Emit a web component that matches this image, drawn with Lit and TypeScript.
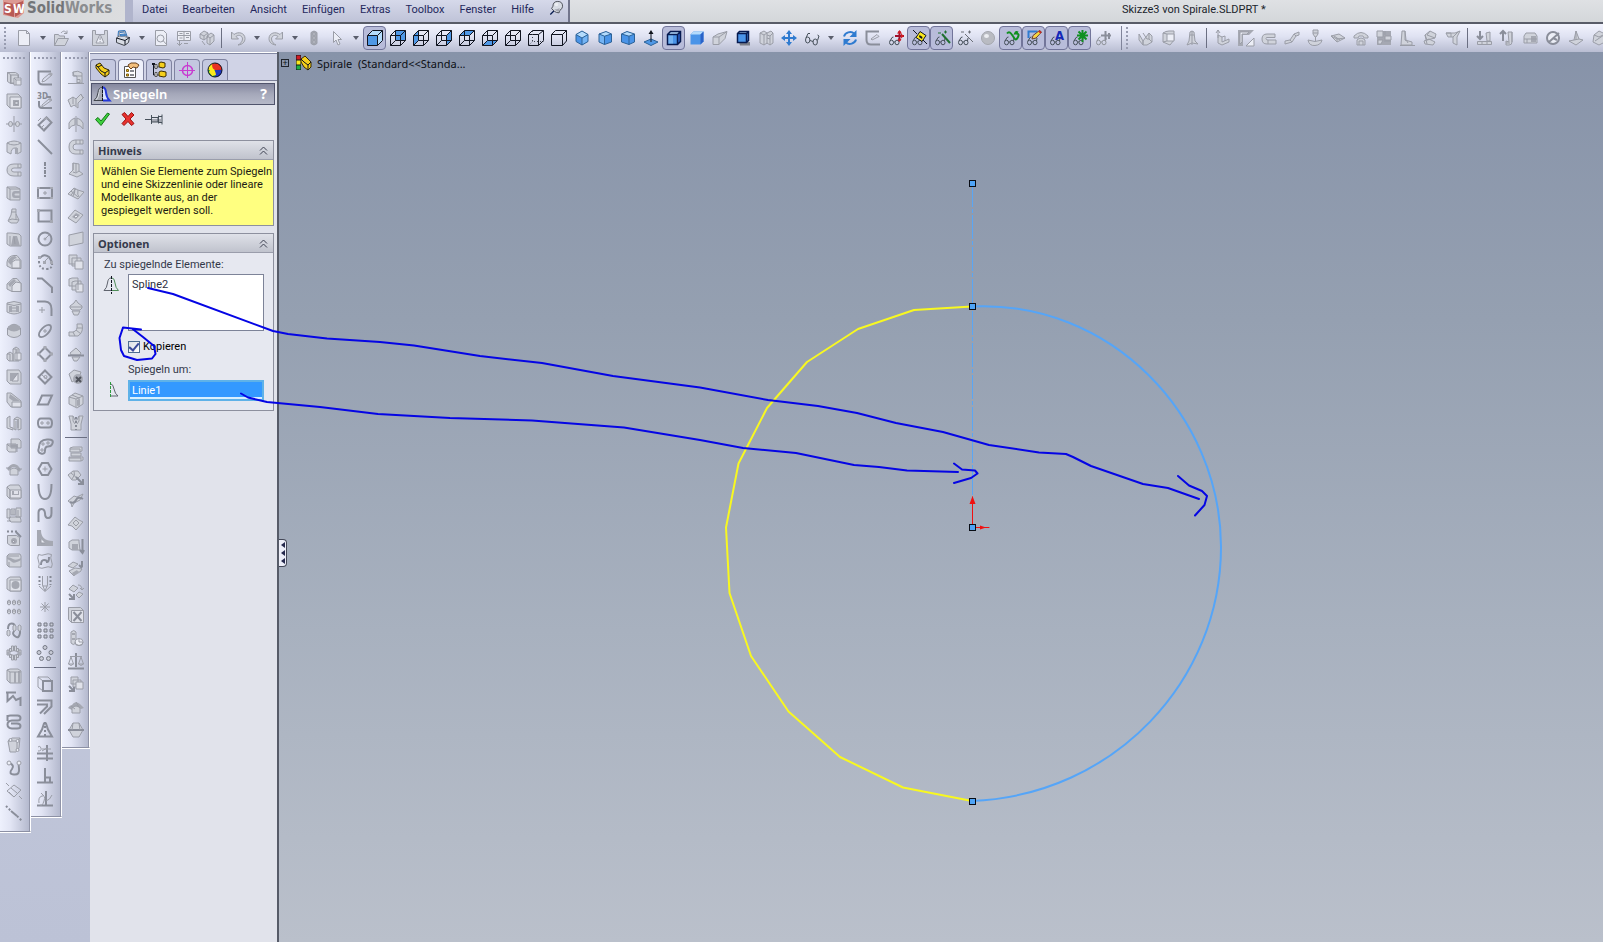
import { LitElement, html, svg, css } from "lit";
import { customElement, property } from "lit/decorators.js";

/*
 * Icon artwork on a 16 x 16 grid. Every icon is a list of shapes divided by "|";
 * the first word of a shape is the paint class, the rest is its path data.
 * A shape that starts with "T" is a text label: T class x y size text.
 */
const GL = "M1.500 12.500a2 2.300 0 1 0 4 0a2 2.300 0 1 0-4 0M7 12.500a2 2.300 0 1 0 4 0a2 2.300 0 1 0-4 0M5.500 12h1.500M2 11L4 7.500l1.500-.5M10.500 11L11 8";
const WIRE = "M.5 5.500h10v10h-10zM5.500 .5h10v10h-10zM.5 5.500l5-5M10.500 5.500l5-5M10.500 15.500l5-5M.5 15.500l5-5";
const CUBE = "M1.500 4.500l3-3h10v10l-3 3h-10zM1.500 4.500h10v10M11.500 4.500l3-3";

const ICONS: Record<string, string> = {
  // standard toolbar
  new: "w M2.500 .5h8l3 3v12h-11z|g M10.500 .5v3h3",
  open: "l M.5 4.500h4l1 1.500h5v3l-2 6.500h-8z|l M.5 15.500l3.500-7h10.500l-3.500 7z|g M7 3c2-2.500 4-2.500 5.500 0M13 .5v3h-3",
  warn: "l M.5 .5h3v4h9v-4h3v15h-15z|w M8 4l4 9H4z|n M7.500 6.500h1.200v3.500h-1.200zM7.500 11h1.200v1.200h-1.200z",
  print: "b1 M3 6L3.500 1l6.500-.5L12 6z|lk M1.500 8l3-2.500 10 2-1 5-4 3-8-3z|k M1.500 8l8.500 2.500 4.500-3M10 10.500V15|w M4 6.500L4.500 2l5-.5 1.500 5z|b1 M5 2.500l4-.5M5 4.500l5-.5 .5 1.500-5 .5z|yy M6 11.500l4 1",
  preview: "w M2.500 .5h8l3 3v12h-11z|g M10 10.500l4 4.500M11 8.500a3.500 3.500 0 1 1-7 0a3.500 3.500 0 1 1 7 0",
  drawing: "w M1.500 1.500h13v9h-13z|g M1.500 5.500h13M8 1.500v9M3.500 3.500h3M10 3.500h3M10 7.500h3M3.500 8h3M3.500 10.500v5M1 13l2.500 2.500L6 13M12 13.500H8",
  assembly: "l M1 4l4-3 4 2v4l-4 3-4-2zM8 6l4-3 3 2v6l-4 4-3-2z|g M1 4l4 2 4-3M5 6v4M8 6l3 2 4-3M11 8v7M3 11l3 4",
  undo: "l M1.500 2v7h7L6 6.500c3-2.500 6.500-.5 6.500 2.500S10 14 8 15c4.500-.5 7-3 7-6.500C15 3 8.500 1 4 4.500z",
  redo: "l M14.500 2v7h-7L10 6.500C7 4 3.500 6 3.500 9S6 14 8 15C3.500 14.500 1 12 1 8.500 1 3 7.500 1 12 4.500z",
  rebuild: "n M5 2.500q3-3 6 0v11q-3 3-6 0z|g M5 2.500q3-3 6 0v11q-3 3-6 0z|w M7 3h2v2H7zM7 7h2v2H7zM7 11h2v2H7z",
  select: "w M4.500 1.500v11l2.500-2.500 2 5 2-1-2-4.500h3.500z",
  front: "bl M.5 5.500l5-5h10v10l-5 5z|bf M1 6h9v9H1z|k M.5 5.500h10v10h-10zM.5 5.500l5-5h10v10l-5 5M10.500 5.500l5-5",
  back: "bf M5.500 .5h10v10h-10z|k " + WIRE,
  left: "bf M.5 5.500l5-5v10l-5 5z|k " + WIRE,
  right: "bf M10.500 5.500l5-5v10l-5 5z|k " + WIRE,
  top: "bf M.5 5.500l5-5h10l-5 5z|k " + WIRE,
  bottom: "bf M.5 15.500l5-5h10l-5 5z|k " + WIRE,
  wire: "k " + WIRE,
  hidden: "k M.5 4.500l4-4h11v10l-5 5H.5zM.5 4.500h10v11M10.500 4.500l5-4|dot M4.500 1v10.500h11M4.500 11.500l-4 4",
  outline: "k M.5 4.500l4-4h11v10.500l-4 4.500H.5zM.5 4.500h11v11M11.500 4.500l4-4",
  iso1: "bb M8 1l6 3.500v7L8 15l-6-3.500v-7z|bl M8 1l6 3.500L8 8 2 4.500z|bm M8 8l6-3.500v7L8 15z|bs M8 1l6 3.500v7L8 15l-6-3.500v-7zM2 4.500L8 8l6-3.500M8 8v7",
  iso2: "bb M2 4l7-2.500L14.500 4v8L7.500 14.500 2 12z|bl M2 4l7-2.500L14.500 4l-7 2.200z|bm M2 4l5.500 2.200v8.300L2 12z|bs M2 4l7-2.500L14.500 4v8L7.500 14.500 2 12zM2 4l5.500 2.200L14.500 4M7.500 6.200v8.300",
  iso3: "bb M1.500 4L7 1.500 14.500 4v8L9 14.500 1.500 12z|bl M1.500 4L7 1.500 14.500 4 9 6.200z|bs M1.500 4L7 1.500 14.500 4v8L9 14.500 1.500 12zM1.500 4L9 6.200 14.500 4M9 6.200v8.300",
  normal: "bf M1 12l7-3 7 3-7 3.500z|bs M1 12l7-3 7 3-7 3.500z|k M8 12V2|K M8 0l2.500 4h-5z",
  shadedEdges: "bb M1.500 4.500l3-3h10v10l-3 3h-10z|bl M1.500 4.500l3-3h10l-3 3z|bm M2 5h5v9H2z|bd M11.500 4.500l3-3v10l-3 3z|k2 " + CUBE,
  shaded: "bb M1.500 4.500l3-3h10v10l-3 3h-10z|bl M1.500 4.500l3-3h10l-3 3z|bd M11.500 4.500l3-3v10l-3 3z",
  persp: "l M1 7l5-3 9-2.500-2 7-6 6H1z|g M1 7h6v7.500M7 7l8-5.500",
  shadow: "gsh M4 12h11v3.500H5z|bb M2.500 3.500l2-2h9v9l-2 2h-9z|bl M2.500 3.500l2-2h9l-2 2z|k2 M2.500 3.500l2-2h9v9l-2 2h-9zM2.500 3.500h9v9M11.500 3.500l2-2",
  section: "l M2 3l4-2 3 2 4-2 2 2v10l-3 2-3-2-3 2-4-2z|g M2 3l4 2v10M6 5l3-2v11M9 5l3 1v9M9 8l3 1M12 6l3-3",
  move: "bu M8 2v12M2 8h12|B M8 0l3 4H5zM8 16l3-4H5zM0 8l4-3v6zM16 8l-4-3v6z",
  glasses: "kk M1.500 10a2.200 3 0 1 0 4.400 0a2.200 3 0 1 0-4.400 0M9 12a2.200 3 0 1 0 4.400 0a2.200 3 0 1 0-4.400 0M6 10.500l3 1M2 8L4 3.500 6 3.500M13.500 10.500L15 6l-1.500-1",
  refresh: "bu M2 6.500C3 2.500 9 .5 12 3.500M14 9.500c-1 4-7 6-10 3|B M14.500 0v7h-7zM1.500 16V9h7z",
  sketchGray: "g2 M14 1.500H1.500V10q0 4.500 4.500 4.500h9|g M6 9l6-4.500 2 2L7 10z",
  gRed: "kk " + GL + "|rd M11.500 1v10M7 6h9|R M11.500 0l2.500 3.500H9zM16 6l-3-2.500v5zM11.500 12l2-3h-4z",
  gPlane: "kk " + GL + "|Y M9 1.500l6 4-4 6-6-4z|ks M2 0l4 4M12 10l4 4M9 1.500l6 4-4 6-6-4z|K M8.500 5l3 2-.5 2-3-2z",
  gAxis: "kk " + GL + "|gn M8 4l8 9|gs M4 3h3M10 2h3M11.500 .5v3",
  gGray: "kk " + GL + "|gg M8 4l8 8M4 2h3M11 2h3M12.500 .5v3",
  sphere: "sp M1.500 8a6.500 6.500 0 1 0 13 0a6.500 6.500 0 1 0-13 0|sh M4 6a2.500 2 0 1 0 5 0a2.500 2 0 1 0-5 0",
  gCurve: "kk " + GL + "|gt M4 3.500q2-2.500 4 0t3.500 5 3.500-1.500-3-3.500q1-2.500 3-1",
  gSketch: "kk " + GL + "|bu M2.500 8V1.500h9|O M15.500 2l-2-1.500L7 5.500 6 9l4-1z|Y M13 2l1 1-5 4.500-1-1z|R M13.500 .5l2 1.500-1 1.500-2-1.500z",
  gText: "kk " + GL + "|T ta 6 10 13 A",
  gPoint: "kk " + GL + "|gt M10.500 0v12M5 5.500h11M6.500 1.500l8 8M14.500 1.500l-8 8",
  gSnap: "gl " + GL + "|g2 M10.500 1v9M6 5.500h10M14 3v6",
  // sheet metal toolbar
  sm1: "l M1 4l4 7v4L1 10zM5 11l6-8 3 3v6l-5 3H5z|g M5 3l4 6M11 3v6l3 3M9 9l2 0",
  sm2: "l M2 3q3-2 6-2h5v9l-4 5-7-3z|w M6 4h7v7H6z|g M2 12l4-1M6 4L2 3",
  sm3: "l M6 2q2-2 4 0l1 9 3 3-6-1-5 2 2-4z|g M8 1v14M6 5h4",
  sm4: "l M3 5l4 2v5l7-3v3l-7 3-4-2z|g M3 0v8M1 3l2-3 2 3M7 7l3-1v5",
  sm5: "n M0 0h16l-5 5H5v11H0z|w M8 16l8-8v8z|w M2 2h9l-2 2H4v8l-2 2z",
  sm6: "l M14 4H6Q1 4 1 9t5 5h9v-4H7q-2 0-2-1.500T7 7.500h7z|g M7 10v4",
  sm7: "l M1 14v-3l5-1 4-6 5-2v3l-3 1-4 6z|g M6 10l2 2M10 4l2 2",
  sm8: "l M6 0h5v4L9 7H8L6 4zM1 10q7 3 14 0-1 5-7 5.500T1 10z|g M6 3h5M8.500 7v4",
  sm9: "l M1 6l8-2 6 4-8 4z|g M4 6l6 4M1 6l6 3 8-1M7 9v3",
  sm10: "l M1 6q7-7 14 0v2h-4l-1-2H6L5 8H1zM4 10q4-4 8 0v5H4z|g M6 15v-4h4v4",
  sm11: "n M1 1h14v14H1z|l M1 1h6v6H1zM9 6h6v4H9zM2 10h5l-2 4H2z|w M9 1v4M8 11h7",
  sm12: "l M3 1h3v9l7 2v3H2z|g M6 1l1 9M6 10q2 0 3 3M1 15.500h15",
  sm13: "l M3 5l5-4 6 3-1 4-8 2zM2 11l5-2 6 3-2 3-8-1z|g M3 5l2 9M8 1l-3 4 8 3",
  sm14: "l M1 3h9l5-2-3 6v8l-4-2V7H3z|g M1 3l5 0v4M8 7l5-5",
  sm15: "l M1.500 11.500h14v3h-14zM10 3l4-1v9h-3z|g2 M4 1v8M1 6l3 3 3-3|g M6 11v3M11 11v3",
  sm16: "l M9 2h4v10q0 3-3 3H7v-4l3 1z|g2 M4 1v10M1 4l3-3 3 3|g M13 2v10M7 13h4",
  sm17: "l M2 6l2-3h9l2 3v7H2z|n M9 6h5v6H9z|g M2 9h13M5 9v4",
  sm18: "w M2 8a6 6 0 1 0 12 0a6 6 0 1 0-12 0|g2 M2 8a6 6 0 1 0 12 0a6 6 0 1 0-12 0M4 12L14 3M8 8l4 2",
  sm19: "l M1 11l5-1 2-9 3 8 4 1-7 5z|g M6 10l5-1M8 1v9",
  sm20: "l M3 5l5-4 6 3v8l-6 3-6-3z|g M3 5l5 2 6-3M4 11l9-6",
  // features
  extrude: "l M1.500 2.500h8l3 2v9h-8l-3-2z|l M5 5h7v8H5z|lw M8 8h7v7H8z|g M1.500 2.500l3 2v9M8 8l2 2h5M10 10v5",
  cut: "l M1 1h11l3 3v11H4l-3-3z|lw M4 4h11v11H4z|n M7 7h6v6H7z|l M9 8.500h3v3H9z",
  revolve: "g M0 8h3M13 8h3M8 0v16|l M2.500 8a2 2.500 0 1 0 4 0a2 2.500 0 1 0-4 0M9.500 8a2 2.500 0 1 0 4 0a2 2.500 0 1 0-4 0|g M6 8h4",
  revcut: "l M1 4q7-4 14 0v9l-4 2V9H9q-4 0-4 6l-4-2z|g M1 4q7 4 14 0|n M9 9h3v6H9z",
  sweep: "l M15 2H8Q1 2 1 8t7 6h7v-4H8q-2.500 0-2.500-2T8 6h7z|g M12 2v4M12 10v4|n M12 6h3v-1h-3z",
  sweepcut: "l M1 2h9l4 2v11H4l-3-2z|g M1 2l3 2v11M4 4h10|n M14 6h-5q-3 0-3 3.500T9 13h5v-2.500H9.500q-1 0-1-1t1-1H14z",
  loft: "l M6 1h4v5l3 6-2 3H5l-3-2 3-6z|g M6 4h4M3 12l3-1 7 1M10 6v6",
  loftcut: "l M1 2h4l8 1 2 2v10H4l-3-2z|n M7 5h4l3 10H5z|w M8 6l1 7M4 5v9",
  fillet: "l M1 8q1-6 7-6.500h3l4 5v8H6L1 12z|n M2 8Q3 2.500 9 2l2 2Q6 5 5 11z|lw M6 8q3-3 8-2v8H6z",
  chamfer: "l M1 7l6-5.500h4l4 5v8H6L1 12z|n M2 7l6-5 2 2-6 6z|lw M6 9l4-4 5 1v8.500H6z",
  rib: "l M1 3q7-3 14 0v9q-7 4-14 0z|n M3 6h3v6H3zM10 6h3v6h-3z|g M1 4q7 3 14 0M6 8h4M6 11h4",
  dome: "l M1.500 5Q8-2.500 14.500 5v7q-6.500 5-13 0z|n M2 3.500q6-4 12 0v3q-6 4-12 0z",
  boxes: "l M1 8l3-2 3 2v7H3l-2-2zM7 3l3-2 3 2v12H7z|lw M9 7h6v7H9z|g M1 8h3v7M7 3h3v4M11 3v12",
  shell: "l M1 1h12l2 3v11H4l-3-3z|n M4 4h8v8H4z|lw M6 12l6-8v8z",
  draft: "l M1 1h4l10 8v6H5l-4-5z|n M4 2l10 7H7L3 6z|lw M6 10h9v5H6z",
  ribs: "l M1 3l3-2v11l3 1v2l-6-2zM8 4l3-2 4 2v10l-3 1V5zM8 4v10l2 1V6|n M11 4h2v9h-2z",
  stack: "l M5 1h8l2 2v7H5zM1 6h9l0 8H3l-2-2z|n M5 6h7v4H5z|g M1 6l2 2h8v6",
  arch: "n M1 8q3-5 7-5t7 6l-2 2q-3-5-5-5-3 0-5 4z|l M4 14V9q4-4 8 0v5z|g M0 7h5M12 8h4",
  boxcut: "l M1 3l3-2h9l2 3v10l-2 1H4l-3-3z|lw M4 6h11v8H4z|n M6 7h2v3h4V7h1v4H6z|g M1 3l3 3M4 6v8",
  pocket: "l M1 2h3v9H1zM5 2h4v6H5zM10 1h5v9h-5zM4 10h10l1 3v2H5l-2-2z|g M7 8V3M12 9V3M1 14h4",
  wizard: "l M1.500 5.500h9l3 2v8h-9l-3-2z|n M5 11a3 3 0 1 0 6 0a3 3 0 1 0-6 0|lw M6.500 10.500h2v2h-2z|gd M1 1.500h10|g2 M10 2l5 5",
  flex: "l M1 3l2-2h11l1 2v11H3l-2-2z|n M1 6q3 1 5 3t9-2v-2q-5 3-8 1T1 4z|g M3 9v5M1 3h12",
  hole: "l M1 3l3-2h10l1 2v12H4l-3-2z|lw M4 4h11v11H4z|n M5.500 9a4 4 0 1 0 8 0a4 4 0 1 0-8 0",
  linpat: "l M1.500 2q1.500-2 3 0v3q-1.500 2-3 0zM6.500 2q1.500-2 3 0v3q-1.500 2-3 0zM11.500 2q1.500-2 3 0v3q-1.500 2-3 0zM1.500 11q1.500-2 3 0v3q-1.500 2-3 0zM6.500 11q1.500-2 3 0v3q-1.500 2-3 0zM11.500 11q1.500-2 3 0v3q-1.500 2-3 0z|g M1.500 3h3M6.500 3h3M11.500 3h3M1.500 12h3M6.500 12h3M11.500 12h3",
  curvepat: "g2 M2 7Q2 1.500 5.500 1.500T9 5q0 3-1.500 5t2 4.500T14 11V6|l M1 9q1.500-2 3 0v4q-1.500 2-3 0zM7 4q1.500-2 3 0v4q-1.500 2-3 0zM12 4q1.500-2 3 0v4q-1.500 2-3 0z",
  circpat: "l M5.500 1h2v5h-2zM8.500 1h2v5h-2zM5.500 10h2v5h-2zM8.500 10h2v5h-2zM1 5h2v5H1zM13 5h2v5h-2zM3.500 3.500h2v3h-2zM10.500 3.500h2v3h-2zM3.500 9.500h2v3h-2zM10.500 9.500h2v3h-2z|g M1 8h4M11 8h4",
  stripes: "l M1 2l3-1h8l3 2v12H4l-3-3z|n M8 4h2v11H8zM12 3h2v12h-2z|g M4 4h11M4 4v11M1 2l3 2",
  zigzag: "g2 M0 1.500h10M1.500 1v9l5.500-5 3 4 4.500-2v8",
  helix: "g2 M1.500 1v6M1.500 3q0-1.500 3-1.500h7q3 0 3 2.500t-3 2.500H6Q1.500 7 1.500 10.500T6 14.500h5q3.500 0 3.500-2.500T11 9.500H5",
  curvecube: "l M2 4l4-3h8l-1 10-3 4H4z|g M2 4h9v9M11 4l3-3|w M3 3a1.500 1.500 0 1 0 3 0a1.500 1.500 0 1 0-3 0M10 4a1.500 1.500 0 1 0 3 0a1.500 1.500 0 1 0-3 0M10 13a1.500 1.500 0 1 0 3 0a1.500 1.500 0 1 0-3 0",
  curvepts: "g2 M3 3q6 2 3 6-4 5 2 5.500t5-6Q12 5 13.500 3|w M1 3a2 2 0 1 0 4 0a2 2 0 1 0-4 0M11 3a2 2 0 1 0 4 0a2 2 0 1 0-4 0",
  plane: "g M1 8l7-6 7 5-7 7z|g M0 0l3 3M5 5l6 5M13 13l3 3M3 9l5 5",
  axis: "gd M0 0l5 5M11 10l5 5|g2 M5 5l6 5",
  // sketch
  sketch: "g2 M14 1.500H1.500V10q0 4.500 4.500 4.500h9|g M6 9l6-5 3 1-7 6-3 1z|n M11 4l3-1.500 2 1.500-2 2z",
  sketch3d: "T tg 0 6 8 3D|g2 M10 4H14M2 8v4q0 3 3 3h10|g M5 12l7-6 3 1-7 5-3 2z|n M11 6l3-1 1 2-2 1z",
  dimension: "g2 M1.500 9l8-7.500 5 5-7.500 8z|g M4 12l3-3M6 14l3-3M1 5l3-3M9 1l6 5|n M6 4l3-3 2 2z",
  line: "g2 M1 1l14 14",
  centerline: "gc M8 0v16",
  centerrect: "g2 M1 3h14v10H1z|g M7 7h2v2H7z|n M0 2h3v2H0zM13 2h3v2h-3zM0 12h3v2H0zM13 12h3v2h-3z",
  rect: "g2 M1.500 2.500h13v11h-13z|n M0 1h3v3H0zM13 12h3v3h-3z",
  circle: "g2 M1.500 8a6.500 6.500 0 1 0 13 0a6.500 6.500 0 1 0-13 0|g M8 8l4-4M6.500 8h3M8 6.500v3",
  arc: "gd M2 7q0 8 7 8t6-6|g2 M3 4Q7-1 12 3l3 5|g M7 8l4-4|n M1 2h3v3H1zM6 7h3v3H6zM13 7h3v3h-3z",
  chamline: "g2 M0 1.500h5l10 9V16",
  filline: "g2 M0 1.500h8Q14.500 2 14.500 9v7|g M2 10h6M5 7v6",
  ellipse: "ge M2.500 13.500A7.800 4 -45 0 1 13.500 2.500A7.800 4 -45 0 1 2.500 13.500|g M6 8h4M8 6v4",
  diamond: "g2 M8 1.500L14.500 8 8 14.500 1.500 8z|n M6.500 0h3v3h-3zM0 6.500h3v3H0zM13 6.500h3v3h-3zM6.500 13h3v3h-3z",
  diamondc: "g2 M8 1.500L14.500 8 8 14.500 1.500 8z|g M5 6l6 5M7 8a1.500 1.500 0 1 0 3 0a1.500 1.500 0 1 0-3 0",
  para: "g2 M5 3.500h10l-4 9H1z",
  slot: "g2 M4 3.500h8q3 0 3 4.500t-3 4.500H4q-3 0-3-4.500t3-4.500z|g M4 7h2v2H4zM10 7h2v2h-2z",
  arcslot: "g2 M2 9Q2 2 10 1.500t5 5q-1 2-4 2t-3 4-4 3-2-6z|g M4 11h2v2H4zM5 5h2v2H5zM10 4h2v2h-2z",
  hex: "g2 M5 2h6l3.500 6-3.500 6H5L1.500 8z|g M5.500 8h5M8 5.500v5",
  parabola: "g2 M1.500 0q0 15 6.500 15T14.500 0",
  spline: "g2 M1.500 15V5.500Q1.500 2 4.500 2T8 6q0 5 3 5 3.500 0 3.500-5V0",
  corner: "n M0 0h4q0 11 12 11v5H0z|w M4 9v4h4",
  surfsp: "g M1.500 1.500Q5 3 8 1.500T14.500 1.500Q13 5 14.500 8T14.500 14.500Q11 13 8 14.500T1.500 14.500Q3 11 1.500 8T1.500 1.500z|g2 M4 12q0-5 3-5t3 2q2 0 2-5",
  tube: "gd M2.500 0v9M13.500 0v9|g M5.500 0v9l2.500 6 2.500-6V0M2 10l6 5.500 6-5.500M5.500 10h5",
  point: "g M8 3v10M3 8h10M4.500 4.500l7 7M11.500 4.500l-7 7",
  grid: "gq M1 1h3v3H1zM7 1h3v3H7zM13 1h3v3h-3zM1 7h3v3H1zM7 7h3v3H7zM13 7h3v3h-3zM1 13h3v3H1zM7 13h3v3H7zM13 13h3v3h-3z",
  dots: "gq M6 2.500a2 2 0 1 0 4 0a2 2 0 1 0-4 0M0 7.500a2 2 0 1 0 4 0a2 2 0 1 0-4 0M12 7.500a2 2 0 1 0 4 0a2 2 0 1 0-4 0M2.500 13.500a2 2 0 1 0 4 0a2 2 0 1 0-4 0M9.500 13.500a2 2 0 1 0 4 0a2 2 0 1 0-4 0",
  convert: "g M1 1h10l4 4v10H6L1 11zM1 1l5 4v10|g2 M6 5h9v10H6z",
  offset: "g2 M0 1.500h14.500v6L7 15M0 5.500h10v2L3 14.500",
  mirror: "g2 M7 1.500h2l2 6 4 7H1l4-7z|gd M8 0v16",
  trim: "g2 M0 8.500h16M0 13.500h16M10 0v16|g M1 2q2-2 3 1t-3 3M5 4l9 0M5 6l5-3",
  perp: "g2 M0 14.500h16M8 0v14M8 9.500h5v5",
  repair: "g2 M0 14.500h16M9 0v14|g M2 12q-1-6 3-7t2 5-4 4M9 10q4-1 6-6M4 2l3 3",
  // surfaces
  s1: "l M5 2q5-2 9 1v10H9V7q0-2-3-1z|g M0 13.500h16M9 9.500h3v3H9M5 2v4h9",
  s2: "l M0 7l5-3 3 2 5-5 2 4-5 5v5l-4-3-3 2z|g M5 4v7M8 6v7M10 10l5-5M12 1l4 4",
  s3: "l M1 13V7q2-4 6-5v7q-4 0-6 4zM9 2q4 1 6 5v6q-2-4-6-4z|g M8 0v16",
  s4: "l M15 1H7Q1 1.500 1 8t6 7h8v-4H8q-3 0-3-3t3-3h7z|g M12 1v4M12 11v4M8 5v-4",
  s5: "l M5 1l6 1v7l4 3-6 3-8-3 4-4z|g M5 1v7M8 2v8M11 9l-3 2-3-1",
  s6: "l M0 9l6-6 4 2 6 2-6 7-4-2z|g M3 6l7 6M6 3q2 4-1 8M10 5q-1 5 1 7M8 4l-5 6",
  s7: "l M0 10l7-8 8 5-7 8z|n M4 9l4-4 4 2-4 4z|w M6 9l2-2 2 1-2 2z",
  s8: "l M1 4l14-3v11L1 15z",
  s9: "l M1 1h8v9H1zM4 4h9v8H4z|lw M7 7h8v8H7z",
  s10: "l M1 2l3-1h6v8H1zM4 5l3-1h6v9H4z|lw M8 7h7v8H8z|g M10 4v9",
  s11: "l M2 6l4-3 2-3 2 3 4 3v2l-2 2H4L2 8zM4 11h8l-2 4H6z|g M2 7h12",
  s12: "l M9 1h5q2 8-4 12H1V9h4q5-1 4-8z|g M9 5h6M5 9l2 4M8 7l5 4",
  s13: "l M2 7l6-5 5 5-1 2H3zM4 11h8l-3 4H6z|g2 M0 9.500h16",
  s14: "l M1 5l5-4 7 2-2 6-7 4z|n M5 10a5 5 0 1 0 10 0a5 5 0 1 0-10 0|kx M8 8l5 5M13 8l-5 5",
  s15: "l M1 5l6-4 8 3v8l-6 4-8-4z|g M1 5l7 2v8M8 7l7-3M4 3l7 3v9|n M9 8l3-1v6l-3 1z",
  s16: "l M1 1h4l2 4 2 0 2-4h4l-2 8v6H3V9z|gd M8 2v13|g M5 1v5l2 3M11 1v5L9 9",
  s17: "l M2 2l3-1h9v4l-3 1H2zM3 7h10v3H3zM1 11h11l3 0v3l-2 1H1z|g M2 3h10v2M1 12h12v3",
  s18: "l M0 6l5-4 5 0 3 4-5 5-4 0z|g M3 4l6 5M6 2q2 4-2 8|g2 M8 8l7 7M15 10v5h-5",
  s19: "l M0 9l6-5 3 1 6-3-3 6-6 3-2 4-1-4z|g2 M2 10q4 2 6-2t7-1",
  s20: "l M0 10l7-8 4 3 4 2-7 8-4-4z|g M8 5l3 3-3 3-3-3z",
  s21: "l M1 4l3-2h7v2l1 8H4l-3-2z|n M4 6h6v6H4z|g2 M14.500 1v13M12 12l2.500 3L16 12",
  s22: "l M0 5l5-4 5 2-5 4zM1 10l6-3 7 1-2 3H8l-2 4z|g2 M14 0v6M11 4l3 3|n M4 12l5-3 2 3-5 3z",
  s23: "l M1 5l4-4 5 3-4 4zM8 11l3-3 4 2-4 4z|g M10 1q4 0 4 5M12 4l2 2 2-2|g2 M1 10l4 4M1 15h5V10",
  s24: "l M.5 .5h12l3 3v12h-12l-3-3z|lw M3.500 3.500h12v12h-12z|g2 M5.500 5l8 9M13.500 5l-8 9",
  s25: "l M3 2q3-3 5 0v11q-3 3-5 0z|n M4 3h3v2H4zM4 8h3v2H4z|w M7 12a4 3.500 0 1 0 8 0a4 3.500 0 1 0-8 0|g M11 9v3h3M7 12a4 3.500 0 1 0 8 0",
  s26: "g2 M0 15.500h16M8 0v14|g M2 3.500h12M3 4l-2.500 7h5zM13 4l-2.500 7h5zM.5 11q2.500 3 5 0M10.500 11q2.500 3 5 0",
  s27: "l M3 1h7v7H3zM5 4h8v7H5z|lw M8 6h7v7H8z|g2 M1 10l5 5M1 15h5v-4",
  s28: "n M0 9q2-3 4-3 3-5 8-1l4 4-3 1q-4-4-9 1z|l M4 14V9q4-4 8 0v5z|g M3 7l4 3M8 3l3 5",
  s29: "l M1 8l4-7h6l4 7-4 7H5z|g2 M0 8h16|g M5 1l-1 7M11 1l1 7",
};

/* Full-colour artwork for the property manager and the tree. */
const COLOR: Record<string, string> = {
  part: "yk M1 3l4-2 4 5 5 2v4l-4 3-4-3-5-6z|k M1 3l2 2 3 4 4 2v4M10 11l4-3M3 5l4-2",
  props: "w2 M1.500 4.500h11v11h-11z|O M5 3l3-2h5l3 2-2 3-4-1-2 2-2-2z|yb M3.500 7.500h2v2h-2zM3.500 12h2v2h-2z|ks M7 9h4M7 13h4",
  config: "k M2.500 1v12h5M2.500 5h5|yk M8 1l2-1 4 1v4l-2 1-4-1zM8 10l2-1 5 1v4l-2 1-5-1z|K M1 1h3v2H1z|w2 M4 2.500h2v4H4zM4 10.500h2v4H4z",
  dimx: "mg M8.500 0v16M0 8.500h16|mg1 M3.500 8.500a5 5 0 1 0 10 0a5 5 0 1 0-10 0",
  ball: "R M8 1a7 7 0 0 1 7 7H8z|bz M15 8a7 7 0 0 1-7 7V8z|gz M1 8h7v7a7 7 0 0 1-7-7z|Y M1 8a7 7 0 0 1 7-7v7z|rr M5 2q7-3 10 5l-6 1q-4 0-4-6z|Y M3 8q5-3 6 5l-4 1-3-4z|bz M10 8q4 0 5 1-1 5-5 6 2-3 0-7z|ks M1 8a7 7 0 1 0 14 0a7 7 0 1 0-14 0",
  mirror: "lk M0 14.500Q3.500 12 4 6.500 4.500 1.500 8 1.500v13z|n M2.500 14Q5 12 5.500 6.500T8 2v12z|bx M9 1.500q2.500 0 3 5t3.500 8H9|dot2 M8.500 0v16",
  ok: "ok M1.500 8.500L4 6.500l3 3.500 6.500-8 2 1L7 14.500z",
  cancel: "no M2 3.500L4.500 1.500 8 5.500l3.500-4L14 4l-4 4 4 4.500-2.500 2L8 10.500l-4 4-2-2L6 8z",
  pin: "kk M-1 8.500h6|n M6 8h9v3H6z|kk M5.500 4v9M6 6.500h6v4.500H6M12.500 4.500v8M16 3.500v10M12 5.500h4M12 11.500h4",
  thumb: "lk M4.500 6q0-5.500 5.500-5.500T15.500 6q0 3-3 4.500l-1 3q-3 0-5-1.500T3 8.500z|n M6 9q4 1 6-1l0 4q-3 1-6-3z|sh M6.500 4a2 2 0 1 0 4 0a2 2 0 1 0-4 0|k2 M5.500 11.500l-4 4",
  tree: "yk M5 4l4-3 6 6v5l-3 3-4-3-3-5z|ks M5 4l3 3 4 3v5M12 10l3-3|K M0 0h5v15H0z|R M.5 .5h4v4h-4z|Y M.5 5.500h4v4h-4z|gz M.5 10.500h4v4h-4z",
  plain: "g4 M8 1Q5 1 4.500 6T1 13.500h7|dot2 M8.500 -1v18|gn2 M9 1q2.500 0 3 5t3.500 7.500H9",
  half: "gn3 M7.500 0v16|g4 M8 2q2 0 3 5t4 7H8",
};

function draw(spec: string, size = 16) {
  return html`<svg class="ic" width=${size} height=${size} viewBox="0 0 16 16" aria-hidden="true">
    ${spec.split("|").map((part) => {
      if (part.startsWith("T ")) {
        const [, cls, x, y, fs, txt] = part.split(" ");
        return svg`<text class=${cls} x=${x} y=${y} font-size=${fs}>${txt}</text>`;
      }
      const i = part.indexOf(" ");
      return svg`<path class=${part.slice(0, i)} d=${part.slice(i + 1)}></path>`;
    })}
  </svg>`;
}

const paint = css`
  * { box-sizing: border-box; }
  .ic { display: block; flex: none; overflow: visible; }
  path { fill: none; stroke: none; stroke-width: 1; }
  text { font-family: "DejaVu Sans Condensed", "DejaVu Sans", sans-serif; font-weight: bold; }
  .g, .l, .lw, .w { stroke: #9a9da7; }
  .l { fill: #d0d3db; }
  .lw { fill: #e0e2ea; }
  .w { fill: #eceef6; }
  .w2 { fill: #fff; stroke: #555; }
  .n { fill: #a5a8b2; }
  .g2, .ge { stroke: #8a8e9a; stroke-width: 2; }
  .g4 { stroke: #60646e; }
  .gq { fill: #c8cbd6; stroke: #767a86; }
  .gd { stroke: #868a96; stroke-width: 2; stroke-dasharray: 2 2; }
  .gc { stroke: #868a96; stroke-width: 2; stroke-dasharray: 4 1 2 1; }
  .gg { stroke: #6a6e76; }
  .gl { stroke: #8f939a; }
  .gsh { fill: #7c7f88; }
  .k, .ks { stroke: #101420; }
  .kk { stroke: #46505a; }
  .k2 { stroke: #061a50; stroke-width: 1.5; }
  .kx { stroke: #50535c; stroke-width: 2; }
  .lk { fill: #d8dce4; stroke: #40444c; }
  .K { fill: #10141c; }
  .b1 { fill: #5ca8f0; stroke: #3c78b8; }
  .bf { fill: #4f98e6; }
  .bm { fill: #74b4f4; }
  .bb { fill: #4a94e8; }
  .bl { fill: #b4dbfc; }
  .bd { fill: #2a62c8; }
  .bs { stroke: #2c6298; }
  .bu { stroke: #2f7bd0; stroke-width: 2; }
  .bx { fill: #d8e2ff; stroke: #2438d8; stroke-width: 2; }
  .B { fill: #2f7bd0; }
  .rd { stroke: #a0102c; stroke-width: 2; }
  .R { fill: #d01c24; }
  .rr { fill: #e83020; }
  .Y, .yy { fill: #fbe81c; }
  .yb { fill: #e8b820; stroke: #806010; }
  .yk { fill: #f5cf1c; stroke: #3a2c00; }
  .O { fill: #f3bf7c; stroke: #6b4420; }
  .gn { stroke: #1f7030; stroke-width: 2; }
  .gn2 { stroke: #4f8c58; }
  .gn3 { stroke: #2f9c40; stroke-dasharray: 3 1; }
  .gs { stroke: #1f7030; }
  .gt { stroke: #0f9020; stroke-width: 2; }
  .gz { fill: #1cb040; }
  .bz { fill: #2038c0; }
  .mg { stroke: #c83cd0; }
  .mg1 { stroke: #c83cd0; stroke-width: 1.5; }
  .sp { fill: #b9bbc2; stroke: #a4a7ae; }
  .sh { fill: #eceef2; }
  .dot { stroke: #404650; stroke-dasharray: 1 2; }
  .dot2 { stroke: #101420; stroke-dasharray: 3 1; }
  .ok { fill: #3ed03e; stroke: #157818; }
  .no { fill: #e8322e; stroke: #9c1010; }
  .ta { fill: #1428b8; }
  .tg { fill: #868a96; }
  button { font: inherit; color: inherit; margin: 0; padding: 0; border: 0; background: none; cursor: pointer; }
`;

/* A strip of icon buttons. "-" is a divider, "v" a drop-down arrow, "#" a grip; a trailing "*" marks a pressed button. */
@customElement("icon-bar")
class IconBar extends LitElement {
  @property() items = "";
  @property({ type: Boolean, reflect: true }) vertical = false;

  static styles = [
    paint,
    css`
      :host { display: flex; align-items: center; flex: none; }
      :host([vertical]) { flex-direction: column; }
      .btn { width: 23px; height: 24px; display: flex; align-items: center; justify-content: center; flex: none; border: 1px solid transparent; border-radius: 4px; }
      :host([vertical]) .btn { height: 23px; }
      .on { background: #b8bcda; border-color: #72759a; }
      .drop { width: 15px; height: 24px; display: flex; align-items: center; justify-content: center; flex: none; }
      .drop::before { content: ""; border: 3px solid transparent; border-top: 4px solid #5a5e6c; border-bottom: 0; }
      .sep { width: 1px; height: 20px; background: #6b6f82; margin: 0 4px 0 3px; flex: none; }
      :host([vertical]) .sep { width: 22px; height: 1px; margin: 3px 0 4px; }
      .grip { width: 2px; height: 22px; margin: 0 6px 0 4px; flex: none; background: repeating-linear-gradient(#989cb0 0 2px, transparent 2px 4px); }
      :host([vertical]) .grip { width: 22px; height: 2px; margin: 5px 0 7px; background: repeating-linear-gradient(90deg, #989cb0 0 2px, transparent 2px 4px); }
    `,
  ];

  render() {
    return this.items.split(/\s+/).filter(Boolean).map((raw) => {
      if (raw === "-") return html`<span class="sep"></span>`;
      if (raw === "#") return html`<span class="grip"></span>`;
      if (raw === "v") return html`<button class="drop" aria-label="Mehr"></button>`;
      const on = raw.endsWith("*");
      const name = on ? raw.slice(0, -1) : raw;
      return html`<button class="btn ${on ? "on" : ""}" aria-label=${name}>${draw(ICONS[name])}</button>`;
    });
  }
}

@customElement("app-root")
class AppRoot extends LitElement {
  static styles = [
    paint,
    css`
      :host {
        display: flex; flex-direction: column; position: relative; height: 100vh; overflow: hidden;
        font: 11px/13px Roboto, "Liberation Sans", sans-serif; color: #20242c; background: #c4c9dc;
      }
      .titlebar { display: flex; height: 22px; flex: none; background: linear-gradient(#dfe1e4, #d4d7da); }
      .brand { width: 125px; display: flex; gap: 3px; padding-left: 3px; align-items: flex-start; background: linear-gradient(90deg, #d3d5d8, #dcdddf); overflow: hidden; }
      .logo { display: block; }
      .logo .face { fill: #b85a56; }
      .logo .side { fill: #dc9a94; }
      .logo text { fill: #fff; font-size: 12px; }
      .brand b { font: bold 15px/16px "DejaVu Sans Condensed", "DejaVu Sans", sans-serif; color: #737578; }
      .brand span { color: #8b8d90; }
      .menu { display: flex; gap: 15px; align-items: flex-start; padding: 0 5px 0 9px; background: linear-gradient(#d6d9ea, #bfc3d8); border-right: 2px solid #72758c; border-left: 8px solid #b0b4cc; }
      .menu button { line-height: 19px; color: #24285c; }
      .menu .thumb { padding-top: 1px; }
      .doc { flex: 1; padding-left: 552px; line-height: 19px; white-space: nowrap; }
      .toolbar { display: flex; align-items: center; height: 30px; flex: none; overflow: hidden; border-top: 2px solid #585c68; background: linear-gradient(#f2f4fe, #dfe2f2 45%, #b9bdd2); }
      .second { border-left: 1px solid #80849a; margin-left: 7px; }
      .work { flex: 1; display: flex; min-height: 0; }
      .rails { width: 90px; flex: none; display: flex; align-items: flex-start; background: linear-gradient(#ccd0e4, #bcc2d6); overflow: hidden; }
      .rail { width: 31px; flex: none; display: flex; justify-content: center; padding: 0 2px 6px 0; background: linear-gradient(90deg, #eef1fd, #e2e5f4 35%, #b2b7cc); border-right: 1px solid #fff; border-bottom: 1px solid #8c90a4; box-shadow: inset -1px 0 #9094a8, 0 1px #fff; }
      .rail.last { width: 28px; padding-right: 0; }
      .panel { width: 189px; flex: none; display: flex; flex-direction: column; background: #e1e3eb; border-right: 2px solid #565b68; }
      .tabs { height: 29px; display: flex; align-items: flex-end; gap: 2px; background: #d0d3e6; border-top: 1px solid #fff; border-bottom: 1px solid #7c8098; box-shadow: inset 0 1px #8489a4; }
      .tab { width: 26px; height: 21px; display: flex; align-items: center; justify-content: center; border: 1px solid #7f83a0; border-bottom: 0; border-radius: 4px 4px 0 0; background: #c4c8e0; }
      .tab.cur { background: #eef0fa; }
      .title { display: flex; align-items: center; gap: 3px; height: 22px; margin: 2px 2px 0 1px; padding: 0 7px 0 2px; border: 1px solid #50546c; background: linear-gradient(#85889f, #a5a8ba 50%, #b6b9c8); color: #fff; }
      .title h1 { flex: 1; margin: 0; font: 600 13px/18px "Noto Sans", "Open Sans", sans-serif; }
      .help { font: bold 14px/18px "Noto Sans", "Open Sans", sans-serif; }
      .actions { display: flex; gap: 10px; padding: 6px 0 13px 4px; }
      .actions button { height: 16px; }
      .box { margin: 0 3px 7px 3px; border: 1px solid #8d909e; background: #e6e8f0; }
      .head { display: flex; align-items: center; height: 19px; padding: 0 5px 0 4px; border-bottom: 1px solid #9a9dab; background: linear-gradient(#dfe1e8, #c0c3cd); }
      .head h2 { flex: 1; margin: 0; font: bold 11px/13px "Noto Sans", "Open Sans", sans-serif; color: #353a4c; }
      .chev { display: block; }
      .chev path { stroke: #3c4050; }
      .hint { margin: 0; padding: 5px 0 8px 7px; background: #ffff80; color: #1c1c14; min-height: 65px; white-space: nowrap; }
      .opts { display: grid; grid-template-columns: 34px 1fr; padding: 5px 9px 9px 0; }
      .cap { grid-column: 1 / 3; padding-left: 10px; line-height: 14px; color: #33384a; }
      .cap2 { grid-column: 2; line-height: 14px; color: #33384a; }
      .side { padding: 5px 0 0 9px; }
      .list, .field { display: block; width: 100%; margin: 0; font: inherit; border-radius: 0; outline: 0; resize: none; }
      .list { height: 57px; margin-top: 2px; padding: 3px; border: 1px solid #7d8398; background: #fff; color: #2c3040; overflow: hidden; }
      .check { grid-column: 2; display: flex; align-items: center; gap: 3px; color: #000; padding: 9px 0 10px; }
      .check input { appearance: none; width: 12px; height: 12px; margin: 0; border: 1px solid #4d6c92; background: linear-gradient(135deg, #dcdfe6, #fff); display: grid; place-content: center; }
      .check input:checked::before { content: ""; width: 4px; height: 8px; margin-bottom: 2px; border: solid #3b4a9c; border-width: 0 2px 2px 0; transform: rotate(40deg); }
      .field { height: 21px; margin-top: 3px; padding: 0 2px; border: 2px solid #5fb2e8; color: #fff; background: linear-gradient(#3399ff 0 15px, #d8f0ff 15px); line-height: 15px; }
      .view { flex: 1; min-width: 0; position: relative; background: linear-gradient(#8793a9, #95a0b1 30%, #a8b1bf 65%, #bac0cb); }
      .tree { display: flex; align-items: center; gap: 7px; padding: 3px 0 0 2px; white-space: pre; color: #0c0f14; font-family: "Noto Sans", "Open Sans", sans-serif; }
      .plus { width: 8px; height: 8px; border: 1px solid #20242c; display: grid; place-content: center; font-size: 9px; line-height: 6px; }
      .tree .ic { margin-right: -2px; }
      .collapse { position: absolute; left: 0; top: 487px; width: 8px; height: 28px; border: 1px solid #444858; border-left: 0; border-radius: 0 4px 4px 0; background: #eceef8; display: flex; flex-direction: column; align-items: center; justify-content: space-evenly; }
      .collapse i { border: 3px solid transparent; border-right: 4px solid #24284c; border-left: 0; }
      .ink { position: absolute; left: 0; top: 0; width: 100%; height: 100%; pointer-events: none; }
      .ink path { stroke-linejoin: round; stroke-linecap: round; }
      .ink .mirrored { stroke: #f8f820; stroke-width: 2; }
      .ink .spline { stroke: #55a5f8; stroke-width: 2; }
      .ink .axis { stroke: #5aa6f4; stroke-dasharray: 24 2 4 2; stroke-linecap: butt; }
      .ink .pen { stroke: #0505e4; stroke-width: 2; }
      .ink .origin { stroke: #f01010; }
      .ink .tip { fill: #f01010; }
      .ink rect { fill: #4fa4f6; stroke: #080c14; }
    `,
  ];

  chevron() {
    return html`<svg class="chev" width="9" height="9" viewBox="0 0 9 9"><path d="M1 4.500l3.500-3.500 3.500 3.500M1 8.500l3.500-3.500 3.500 3.500"></path></svg>`;
  }

  render() {
    const menus = ["Datei", "Bearbeiten", "Ansicht", "Einfügen", "Extras", "Toolbox", "Fenster", "Hilfe"];
    const tabs = ["part", "props", "config", "dimx", "ball"];
    const nodes = [[972, 183], [972, 306], [972, 527], [972, 801]];
    return html`
      <header class="titlebar">
        <div class="brand">
          <svg class="logo" width="21" height="18" viewBox="0 0 21 18"><path class="side" d="M0 0h21v13l-6 5L0 15z"></path><path class="face" d="M1 2l10 2v13L1 14zM12 4l8-3v11l-8 5z"></path><text x="1" y="13">S</text><text x="10" y="13">W</text></svg>
          <b>Solid<span>Works</span></b>
        </div>
        <nav class="menu">
          ${menus.map((m) => html`<button>${m}</button>`)}
          <button class="thumb" aria-label="Anheften">${draw(COLOR.thumb, 14)}</button>
        </nav>
        <div class="doc">Skizze3 von Spirale.SLDPRT *</div>
      </header>
      <div class="toolbar">
        <icon-bar items="# new v open v warn print v preview drawing assembly - undo v redo v rebuild select v front* back left right top bottom wire hidden outline iso1 iso2 iso3 normal shadedEdges* shaded persp shadow section move glasses v refresh sketchGray gRed gPlane* gAxis* gGray sphere gCurve* gSketch* gText* gPoint* gSnap"></icon-bar>
        <icon-bar class="second" items="# sm1 sm2 sm3 - sm4 sm5 sm6 sm7 sm8 sm9 sm10 sm11 sm12 sm13 sm14 - sm15 sm16 sm17 sm18 sm19 sm20"></icon-bar>
      </div>
      <div class="work">
        <div class="rails">
          <div class="rail"><icon-bar vertical items="# extrude cut revolve revcut sweep sweepcut loft loftcut fillet chamfer rib dome boxes shell draft ribs stack arch boxcut pocket wizard flex hole linpat curvepat circpat stripes zigzag helix curvecube curvepts plane axis"></icon-bar></div>
          <div class="rail"><icon-bar vertical items="# sketch sketch3d dimension line centerline centerrect rect circle arc chamline filline ellipse diamond diamondc para slot arcslot hex parabola spline corner surfsp tube point grid dots - convert offset mirror trim perp repair"></icon-bar></div>
          <div class="rail last"><icon-bar vertical items="# s1 s2 s3 s4 s5 s6 s7 s8 s9 s10 s11 s12 s13 s14 s15 s16 - s17 s18 s19 s20 s21 s22 s23 s24 s25 s26 s27 s28 s29"></icon-bar></div>
        </div>
        <aside class="panel">
          <div class="tabs">${tabs.map((t, i) => html`<button class="tab ${i === 1 ? "cur" : ""}" aria-label=${t}>${draw(COLOR[t])}</button>`)}</div>
          <div class="title">${draw(COLOR.mirror)}<h1>Spiegeln</h1><button class="help">?</button></div>
          <div class="actions">
            <button aria-label="OK">${draw(COLOR.ok)}</button>
            <button aria-label="Abbrechen">${draw(COLOR.cancel)}</button>
            <button aria-label="Fixieren">${draw(COLOR.pin)}</button>
          </div>
          <section class="box">
            <div class="head"><h2>Hinweis</h2>${this.chevron()}</div>
            <p class="hint">Wählen Sie Elemente zum Spiegeln<br />und eine Skizzenlinie oder lineare<br />Modellkante aus, an der<br />gespiegelt werden soll.</p>
          </section>
          <section class="box">
            <div class="head"><h2>Optionen</h2>${this.chevron()}</div>
            <div class="opts">
              <label class="cap" for="elements">Zu spiegelnde Elemente:</label>
              <span class="side">${draw(COLOR.plain)}</span>
              <textarea class="list" id="elements" readonly .value=${"Spline2"}></textarea>
              <label class="check"><input type="checkbox" checked />Kopieren</label>
              <label class="cap2" for="about">Spiegeln um:</label>
              <span class="side">${draw(COLOR.half)}</span>
              <input class="field" id="about" readonly .value=${"Linie1"} />
            </div>
          </section>
        </aside>
        <main class="view">
          <div class="tree"><span class="plus">+</span>${draw(COLOR.tree)}<span>Spirale  (Standard&lt;&lt;Standa...</span></div>
          <button class="collapse" aria-label="Einklappen"><i></i><i></i><i></i></button>
        </main>
      </div>
      <svg class="ink">
        <path class="axis" d="M972.500 183V524"></path>
        <path class="mirrored" d="M972 306.500L914 310 858 329 807 362 767 408 738.500 463.500 726 527.500 729.500 593 751 656 788.500 711.500 840 757 903 787.500 972 801"></path>
        <path class="spline" d="M972 306.500C1110 300 1221 415 1221 547C1221 680 1115 795 972 801"></path>
        <path class="origin" d="M972.500 524V497M976 527.500h13"></path>
        <path class="tip" d="M972.500 496l3 8h-6zM986 527.500l-6-2v4z"></path>
        ${nodes.map(([x, y]) => svg`<rect x=${x - 2.5} y=${y - 2.5} width="6" height="6"></rect>`)}
        <path class="pen" d="M148 288L173 294 273 331 288 334 327 338.500 380 342 414 345.500 480 356 542 363 613 376 700 387.500 768 400 818 406 857 413 896 423 943 432 989 445 1039 452.500 1066 454 1073 457 1091 466 1143 484 1168 488 1199 499M1178 476L1189 485.500 1202 491 1207 496 1204.500 505 1195 515.500"></path>
        <path class="pen" d="M241 393.500L248 397.500 267 402 320 407 378 414 450 418 532 420.500 624 427.500 700 440 743 448 796 453 854 465 879 467 907 470.500 958 472M954 463.500L962 469.500 975 470.500 977.500 473.500 971 478 954 483"></path>
        <path class="pen" d="M141 329.500L123 327.500 119.500 338 121 350 124 356 137 360 152 358.500 155.500 354 154 346 143 337 132 328.500"></path>
      </svg>
    `;
  }
}
